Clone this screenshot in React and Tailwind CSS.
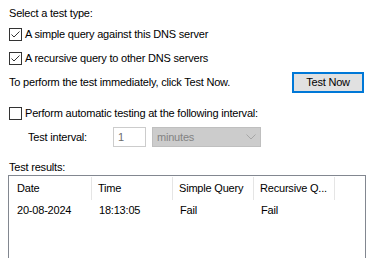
const FONT = { fontFamily: '"Liberation Sans", Arial, sans-serif' }

function Check({ checked }) {
  return (
    <span className="w-[13px] h-[13px] border border-[#333333] bg-white flex items-center justify-center shrink-0">
      {checked && (
        <svg width="11" height="11" viewBox="0 0 11 11" fill="none">
          <path d="M1.5 5.5 L4 8 L9.5 2.5" stroke="#333333" strokeWidth="1" />
        </svg>
      )}
    </span>
  )
}

const COLS = [
  { name: 'Date', w: 'w-[83px] pl-[8px]' },
  { name: 'Time', w: 'w-[81px] pl-[6px]' },
  { name: 'Simple Query', w: 'w-[81px] pl-[6px]' },
  { name: 'Recursive Q...', w: 'w-[81px] pl-[6px]' },
]

const ROW = ['20-08-2024', '18:13:05', 'Fail', 'Fail']

export default function App() {
  return (
    <div className="w-[375px] h-[258px] bg-white text-[11px] tracking-[-0.2px] text-black overflow-hidden whitespace-nowrap" style={FONT}>
      <div className="mt-[5px] h-[16px] pl-[9px] flex items-center">Select a test type:</div>

      <div className="mt-[3px] h-[21px] pl-[9px] flex items-center gap-[3px]">
        <Check checked />
        <span>A simple query against this DNS server</span>
      </div>
      <div className="mt-[3px] h-[21px] pl-[9px] flex items-center gap-[3px]">
        <Check checked />
        <span>A recursive query to other DNS servers</span>
      </div>

      <div className="mt-[3px] h-[21px] pl-[9px] pr-[11px] flex items-center justify-between">
        <span>To perform the test immediately, click Test Now.</span>
        <button className="w-[72px] h-[21px] bg-[#e1e1e1] border-2 border-[#0078d7] flex items-center justify-center">
          Test Now
        </button>
      </div>

      <div className="mt-[10px] h-[21px] pl-[9px] flex items-center gap-[3px]">
        <Check />
        <span>Perform automatic testing at the following interval:</span>
      </div>

      <div className="mt-[3px] h-[20px] pl-[28px] flex items-center">
        <span className="w-[85px]">Test interval:</span>
        <div className="w-[33px] h-[20px] border border-[#cccccc] bg-white text-[#6d6d6d] pl-[4px] flex items-center">1</div>
        <div className="ml-[6px] w-[109px] h-[20px] border border-[#bfbfbf] bg-[#cccccc] text-[#838383] pl-[4px] pr-[4px] flex items-center justify-between">
          <span>minutes</span>
          <svg width="10" height="6" viewBox="0 0 10 6" fill="none">
            <path d="M0.5 0.5 L5 5 L9.5 0.5" stroke="#a6a6a6" strokeWidth="1" />
          </svg>
        </div>
      </div>

      <div className="mt-[12px] h-[16px] pl-[9px] flex items-center">Test results:</div>

      <div className="ml-[8px] w-[358px] h-[100px] border border-[#828790] bg-white">
        <div className="h-[25px] flex items-center">
          {COLS.map((c) => (
            <div key={c.name} className={`${c.w} h-[23px] border-r border-[#e5e5e5] flex items-center`}>
              {c.name}
            </div>
          ))}
        </div>
        <div className="h-[19px] flex items-center">
          {ROW.map((v, i) => (
            <div key={i} className={`${COLS[i].w} flex items-center`}>
              <span className={i === 0 ? '' : 'pl-[1px]'}>{v}</span>
            </div>
          ))}
        </div>
      </div>
    </div>
  )
}
